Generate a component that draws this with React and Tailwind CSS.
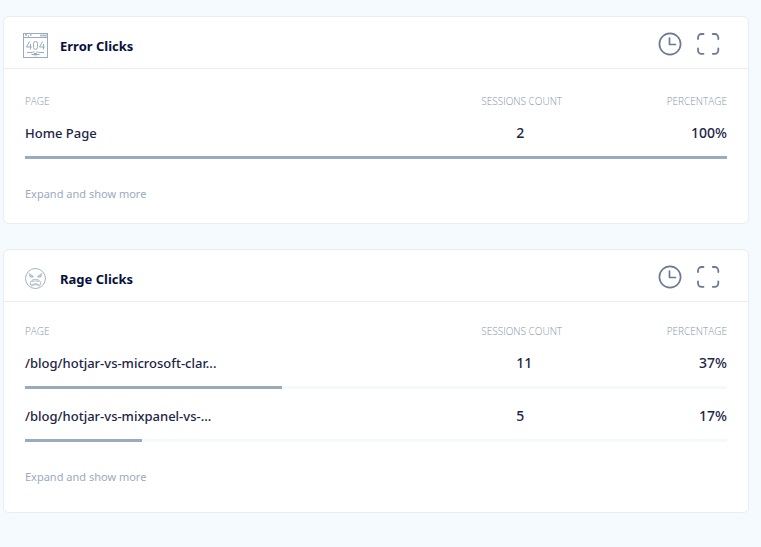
import clsx from 'clsx';

const TOTAL_SESSIONS = 30;

function ErrorPageIcon() {
    return (
        <svg viewBox="0 0 26 26" className="h-[26px] w-[26px]" fill="none" stroke="#9aabbd" aria-hidden="true">
            <rect x="0.5" y="0.5" width="24" height="24" />
            <path d="M0 4.5h25" />
            <path d="M2 2h2M5 3h1M7 2h1.5" strokeWidth="1.4" />
            <path d="M17 2.5h7" strokeWidth="2" strokeOpacity="0.75" />
            {/* 4 0 4 */}
            <path d="M6.500 8.500L3.500 14H8.800M7.500 11v5.500" />
            <rect x="10.500" y="8.500" width="4" height="7.800" rx="2" />
            <path d="M19.500 8.500l-3 5.500h5.300M20.500 11v5.500" />
            {/* cable */}
            <path d="M4 19.5h5.5M15.5 19.5H21" />
            <path d="M9.5 19h2M13.5 19h2M8.5 21.5h8M11 20.5h3" strokeWidth="1.2" />
            <path d="M12.5 22.5V25" strokeWidth="2" strokeDasharray="0.8 0.6" />
        </svg>
    );
}

function RageIcon() {
    return (
        <svg viewBox="0 0 26 26" className="h-[26px] w-[26px]" fill="none" stroke="#a3b3c4" strokeLinecap="round" aria-hidden="true">
            <circle cx="12.5" cy="12.5" r="10" />
            <path d="M6 7.500l4.200 3M19 7.500l-4.200 3" />
            <path d="M6.800 9.200c0 1.600 2 2.200 3 1.300M18.200 9.200c0 1.600-2 2.200-3 1.300" strokeWidth="1.300" />
            <path d="M7.500 18.300c-.8-2.600 1.500-4.800 5-4.800s5.800 2.200 5 4.800c-.4 1.200-1.500 1-2.300.3-1.600-1-3.800-1-5.400 0-.8.7-1.900.9-2.300-.3z" />
            <path d="M9.200 15.600c1.800-1 4.800-1 6.600 0M8.500 20.200c2-2 6-2 8 0" strokeWidth="0.8" />
        </svg>
    );
}

function ClockIcon() {
    return (
        <svg viewBox="0 0 24 24" className="h-6 w-6" fill="none" stroke="#6b7a92" strokeWidth="1.7" strokeLinecap="round" aria-hidden="true">
            <circle cx="12" cy="12" r="10.600" />
            <path d="M11.500 6v6.500h6" strokeLinejoin="round" />
        </svg>
    );
}

function ExpandIcon() {
    return (
        <svg viewBox="0 0 24 24" className="h-6 w-6" fill="none" stroke="#6b7a92" strokeWidth="1.800" strokeLinecap="round" aria-hidden="true">
            <path d="M2 7V5.500a3.500 3.500 0 0 1 3.500-3.500H7.500" />
            <path d="M16.800 2h2a3.500 3.500 0 0 1 3.500 3.500V7" />
            <path d="M22.300 16.500v1.800a3.500 3.500 0 0 1-3.500 3.500h-2" />
            <path d="M7.500 21.800H5.500a3.500 3.500 0 0 1-3.500-3.500V16.500" />
        </svg>
    );
}

function ClicksCard({ title, icon, rows, total, bodyClass }) {
    return (
        <section className="rounded-md border border-[#e8edf4] bg-white">
            <header className="flex h-[52px] items-center border-b border-[#e8edf4] pt-1.5 pr-7 pl-[19px]">
                {icon}
                <h2 className="ml-[11px] text-[13px] leading-5 font-bold text-[#06113c]">{title}</h2>
                <div className="mb-1 ml-auto flex gap-[14px]">
                    <button type="button" aria-label={`${title} history`}>
                        <ClockIcon />
                    </button>
                    <button type="button" aria-label={`Enlarge ${title}`}>
                        <ExpandIcon />
                    </button>
                </div>
            </header>

            <div className={clsx('px-[21px]', bodyClass)}>
                <table className="w-full table-fixed border-collapse text-sm leading-5 font-medium text-[#1c2544]">
                    <thead className="font-['Open_Sans','Noto_Sans',sans-serif] text-[10px] leading-4 text-[#8496ab]">
                        <tr>
                            <th scope="col" className="w-[65%] p-0 text-left font-light">PAGE</th>
                            <th scope="col" className="p-0 text-left font-light">SESSIONS COUNT</th>
                            <th scope="col" className="p-0 text-right font-light">PERCENTAGE</th>
                        </tr>
                    </thead>
                    {rows.map((row) => (
                        <tbody key={row.page}>
                            <tr>
                                <td className="p-0 pt-[14px] text-[13px] leading-5">{row.page}</td>
                                <td className="p-0 pt-[14px] pl-[35px]">{row.sessions}</td>
                                <td className="p-0 pt-[14px] text-right">{row.percentage}</td>
                            </tr>
                            <tr>
                                <td colSpan={3} className="p-0 pt-[13px] pb-[3px]">
                                    <div className="h-[3px] bg-[#f4f9fe]">
                                        <div className="h-full bg-[#9aabbd]" style={{ width: `${(row.sessions / total) * 100}%` }} />
                                    </div>
                                </td>
                            </tr>
                        </tbody>
                    ))}
                </table>
                <button type="button" className="mt-6 block text-[11px] leading-4 text-[#9aabbd]">
                    Expand and show more
                </button>
            </div>
        </section>
    );
}

export default function App() {
    return (
        <main className="flex min-h-screen flex-col gap-[25px] bg-[#f5fafe] pt-4 pr-3 pb-8 pl-[3px] font-['Noto_Sans','Open_Sans',sans-serif]">
            <ClicksCard
                title="Error Clicks"
                icon={<ErrorPageIcon />}
                total={2}
                bodyClass="pt-6 pb-[21px]"
                rows={[{ page: 'Home Page', sessions: 2, percentage: '100%' }]}
            />
            <ClicksCard
                title="Rage Clicks"
                icon={<RageIcon />}
                total={TOTAL_SESSIONS}
                bodyClass="pt-[21px] pb-[27px]"
                rows={[
                    { page: '/blog/hotjar-vs-microsoft-clar...', sessions: 11, percentage: '37%' },
                    { page: '/blog/hotjar-vs-mixpanel-vs-...', sessions: 5, percentage: '17%' },
                ]}
            />
        </main>
    );
}
